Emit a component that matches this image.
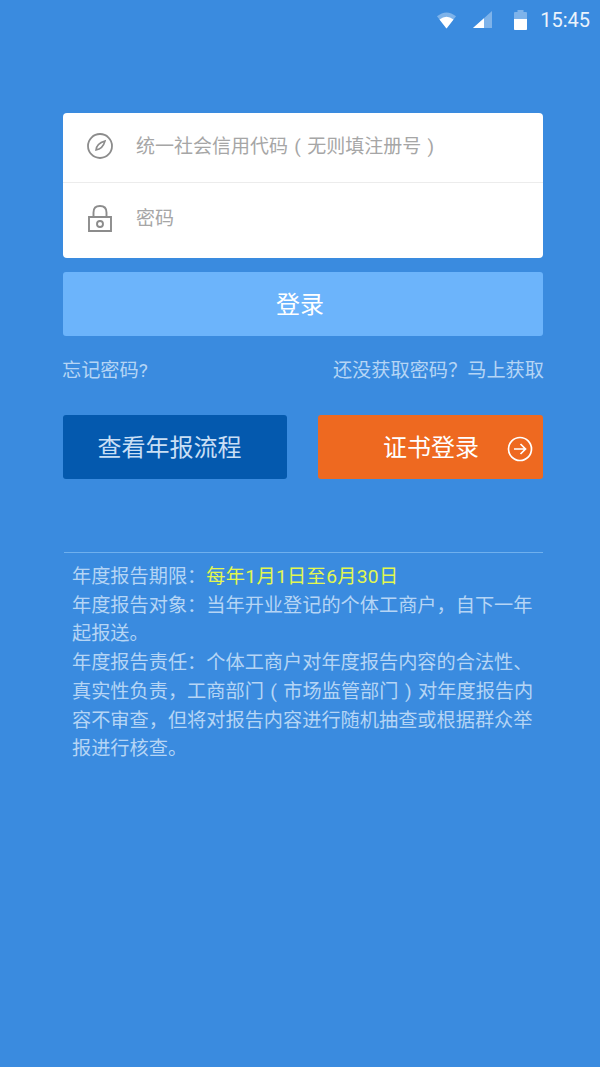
<script lang="ts">
</script>

<div class="page">
  <div class="status">
    <svg class="wifi" width="19" height="18" viewBox="0 0 20 18">
      <path d="M0 5 Q10 -3 20 5 L10 18 Z" fill="#fff" opacity=".35" />
      <path d="M2.6 8.4 Q10 3 17.4 8.4 L10 18 Z" fill="#fff" />
    </svg>
    <svg class="signal" width="19" height="17" viewBox="0 0 19 17">
      <path d="M0 17 L19 0 V17 Z" fill="#fff" opacity=".35" />
      <path d="M0 17 L11 7.2 V17 Z" fill="#fff" />
    </svg>
    <svg class="battery" width="13" height="20" viewBox="0 0 13 20">
      <path d="M3.5 0 H9.5 V2 H12 Q13 2 13 3 V19 Q13 20 12 20 H1 Q0 20 0 19 V3 Q0 2 1 2 H3.5 Z" fill="#fff" opacity=".35" />
      <path d="M0 9 H13 V19 Q13 20 12 20 H1 Q0 20 0 19 Z" fill="#fff" />
    </svg>
    <span class="time">15:45</span>
  </div>

  <main>
    <div class="card">
      <div class="field first">
        <svg width="26" height="26" viewBox="0 0 26 26" fill="none" stroke="#8c8c8c" stroke-width="1.8">
          <circle cx="13" cy="13" r="12" />
          <path d="M9 17 Q9.5 10.5 18 8 Q15.8 16 9 17 Z" stroke-width="1.6" />
        </svg>
        <span>统一社会信用代码 ( 无则填注册号 )</span>
      </div>
      <div class="field second">
        <svg width="24" height="27" viewBox="0 0 24 27" fill="none" stroke="#8c8c8c" stroke-width="1.9">
          <path d="M1 12 H23 V26 H1 Z" />
          <path d="M5.5 12 V7.5 Q5.5 1 12 1 Q18.5 1 18.5 7.5 V12" />
          <circle cx="12" cy="19" r="3" />
        </svg>
        <span>密码</span>
      </div>
    </div>

    <button class="login">登录</button>

    <div class="links">
      <span>忘记密码?</span>
      <span>还没获取密码？马上获取</span>
    </div>

    <div class="actions">
      <button class="flow">查看年报流程</button>
      <button class="cert">
        证书登录
        <svg width="26" height="26" viewBox="0 0 26 26" fill="none" stroke="#fff" stroke-width="1.7">
          <circle cx="13" cy="13" r="11.5" />
          <path d="M7 13 H18.5 M13.5 8 L18.5 13 L13.5 18" />
        </svg>
      </button>
    </div>

    <div class="notes">
      <p>年度报告期限：<em>每年1月1日至6月30日</em></p>
      <p>年度报告对象：当年开业登记的个体工商户，自下一年起报送。</p>
      <p>年度报告责任：个体工商户对年度报告内容的合法性、真实性负责，工商部门 ( 市场监管部门 ) 对年度报告内容不审查，但将对报告内容进行随机抽查或根据群众举报进行核查。</p>
    </div>
  </main>
</div>

<style>
  :global(body) {
    margin: 0;
    background: #3a8bdf;
  }
  .page {
    width: 600px;
    height: 1067px;
    overflow: hidden;
    background: #3a8bdf;
    font-family: Roboto, "Noto Sans CJK SC", sans-serif;
  }
  .status {
    height: 39px;
    display: flex;
    align-items: center;
    justify-content: flex-end;
    padding-right: 10px;
    color: #fff;
  }
  .wifi { margin-right: 17px; }
  .signal { margin-right: 22px; }
  .battery { margin-right: 13px; }
  .time {
    font-size: 20px;
    opacity: .9;
  }
  main {
    padding: 74px 57px 0 63px;
  }
  .card {
    background: #fff;
    border-radius: 4px;
    display: flex;
    flex-direction: column;
  }
  .field {
    display: flex;
    align-items: center;
    gap: 23px;
    padding-left: 24px;
    color: #a6a6a6;
    font-size: 19px;
  }
  .field svg { margin-bottom: 4px; }
  .first { height: 69px; }
  .first span { margin-bottom: 6px; word-spacing: 1.6px; }
  .second {
    height: 75px;
    border-top: 1px solid #ececec;
    padding-left: 25px;
    gap: 24px;
  }
  .second span { margin-bottom: 8px; }
  button {
    border: none;
    font: inherit;
    color: #fff;
    padding: 0;
  }
  .login {
    display: block;
    width: 100%;
    height: 64px;
    margin-top: 14px;
    padding: 0 6px 4px 0;
    background: #6cb4fb;
    border-radius: 3px;
    font-size: 24px;
  }
  .links {
    display: flex;
    justify-content: space-between;
    margin: 21px -1px 0 -1px;
    font-size: 19.2px;
    line-height: 28px;
    color: #b5d5f5;
  }
  .actions {
    display: flex;
    justify-content: space-between;
    margin-top: 30px;
  }
  .actions button {
    height: 64px;
    border-radius: 3px;
    font-size: 24px;
  }
  .flow {
    width: 224px;
    background: #0459ae;
    color: #c9dff5;
    padding: 0 11px 4px 0;
  }
  .cert {
    width: 225px;
    background: #ee6920;
    display: flex;
    align-items: center;
    padding: 0 0 4px 65px;
    box-sizing: border-box;
  }
  .cert svg { margin: 7px 0 0 28px; }
  .notes {
    margin: 73px 0 0 1px;
    padding: 10px 2px 0 8px;
    border-top: 1px solid #6fb0ee;
    color: #b5d5f5;
    font-size: 19.2px;
    line-height: 28.7px;
  }
  .notes p { margin: 0; word-spacing: 1.7px; }
  .notes em {
    font-style: normal;
    color: #e3f74f;
    letter-spacing: .33px;
  }
</style>
